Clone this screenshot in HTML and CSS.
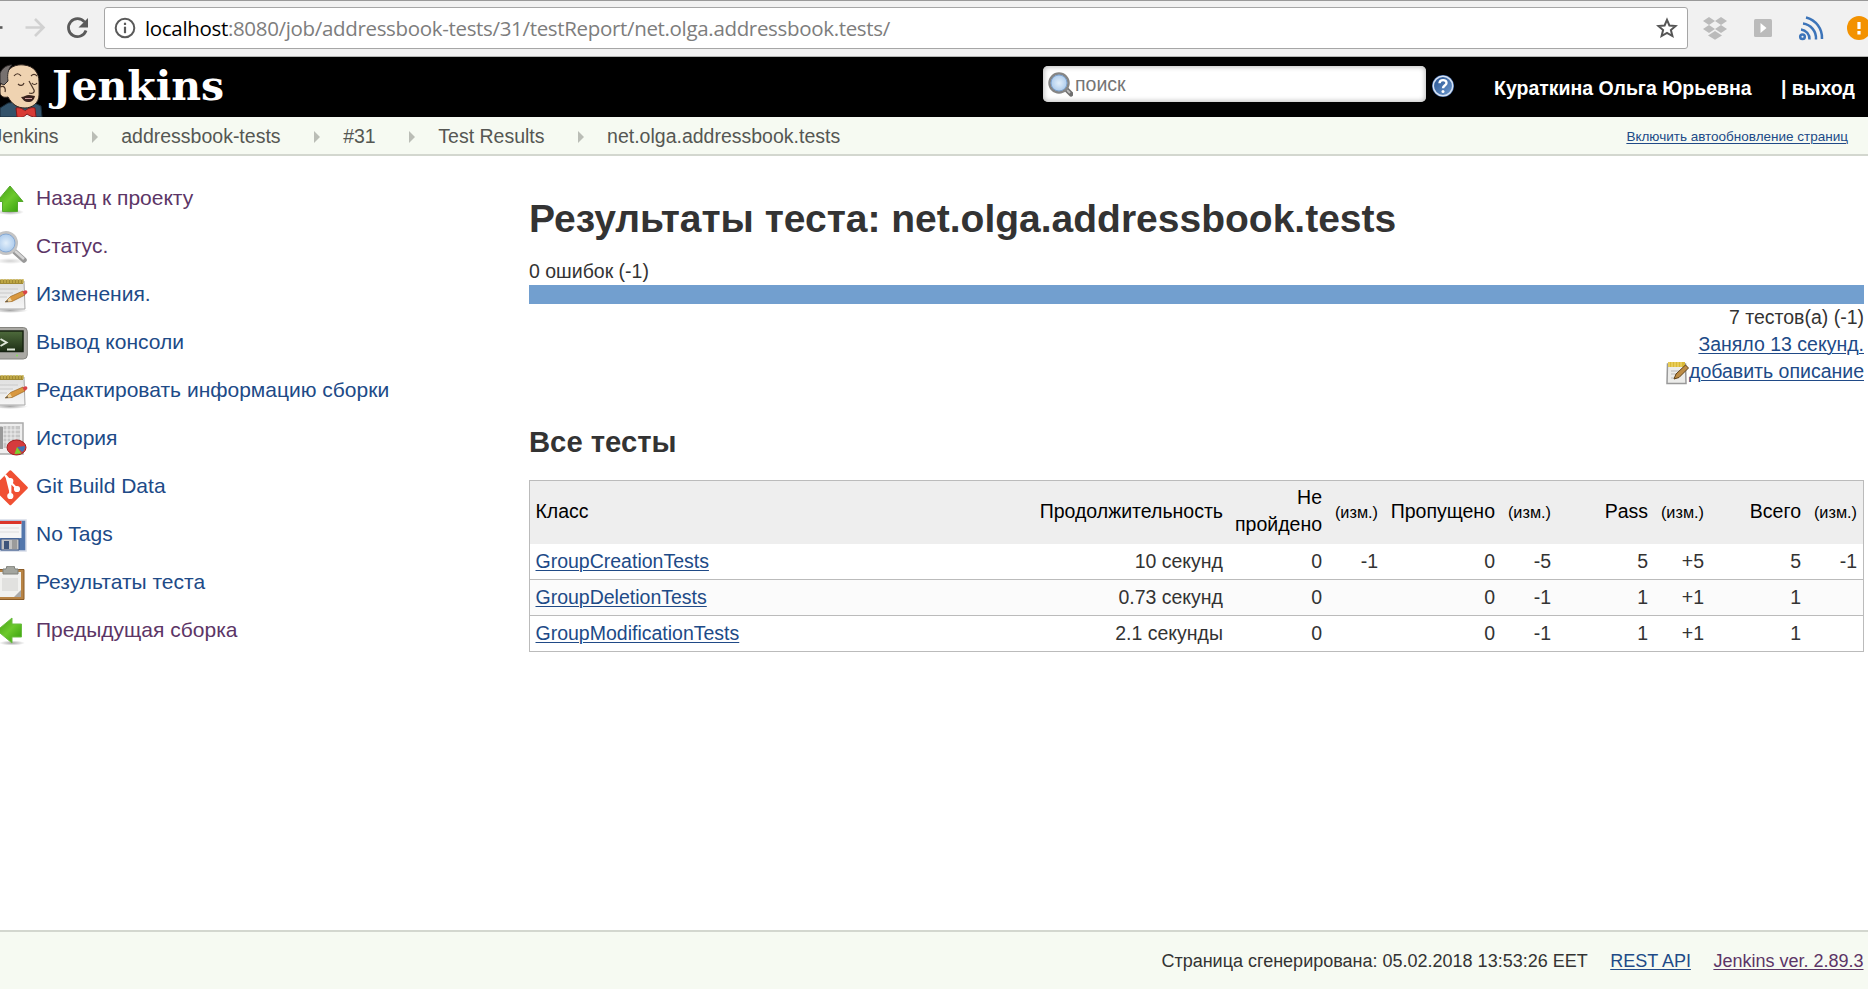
FILE: index.html
```html
<!DOCTYPE html>
<html lang="ru">
<head>
<meta charset="utf-8">
<title>Результаты теста: net.olga.addressbook.tests</title>
<link rel="stylesheet" href="styles.css">
</head>
<body>
<svg class="defs" width="0" height="0" aria-hidden="true">
  <defs>
    <linearGradient id="green" x1="0" y1="0" x2="1" y2="1"><stop offset="0" stop-color="#3f9a12"/><stop offset=".5" stop-color="#6cc92c"/><stop offset="1" stop-color="#2f9a08"/></linearGradient>
    <linearGradient id="paper" x1="0" y1="0" x2="0" y2="1"><stop offset="0" stop-color="#dedede"/><stop offset="1" stop-color="#f6f6f6"/></linearGradient>
    <linearGradient id="screen" x1="0" y1="0" x2="0" y2="1"><stop offset="0" stop-color="#4e6b3c"/><stop offset="1" stop-color="#1e2f16"/></linearGradient>
    <radialGradient id="lens"><stop offset="0" stop-color="#e2effb"/><stop offset="1" stop-color="#a5c6ea"/></radialGradient>
    <radialGradient id="shade"><stop offset="0" stop-color="#000" stop-opacity=".35"/><stop offset="1" stop-color="#000" stop-opacity="0"/></radialGradient>
    <linearGradient id="help" x1="0" y1="0" x2="1" y2="1"><stop offset="0" stop-color="#24508f"/><stop offset="1" stop-color="#6f9bd0"/></linearGradient>
    <symbol id="notepad" viewBox="0 0 36 36">
      <ellipse cx="18" cy="32.500" rx="18" ry="2.500" fill="url(#shade)"/>
      <path d="M3 3h29l1 28H2z" fill="url(#paper)" stroke="#a9a9a9"/>
      <path d="M3 1.500h28V6H3z" fill="#a08a35"/>
      <path d="M4 1v4m3-4v4m3-4v4m3-4v4m3-4v4m3-4v4m3-4v4m3-4v4m3-4v4m3-4v4" stroke="#cdb650" stroke-width="1.300"/>
      <path d="M6 11h20M6 15h15M6 19h9" stroke="#c9c9c9"/>
      <path d="M13 24l5.500-5.500L31 13l2 4-13 6.500z" fill="#d9983f" stroke="#9a6420" stroke-width=".7"/>
      <path d="M13 24l5-4.500 2 3.500z" fill="#ecd3a0"/><path d="M13 24l2.500-1.800.8 1.300z" fill="#333"/>
      <path d="M30.500 13.500l3-1.300c1.800 0 2.300 1.800 1.500 3l-2.500 1.800z" fill="#d8444a"/>
    </symbol>
  </defs>
</svg>

<div class="toolbar">
  <svg class="nav" width="104" height="56" viewBox="0 0 104 56" fill="none">
    <path d="M-8 27.500H2.500" stroke="#5a5a5a" stroke-width="2.600"/>
    <path d="M25.500 27.500H43M35 19l8.500 8.500L35 36" stroke="#d1d1d1" stroke-width="2.600"/>
    <path d="M84.500 22A9 9 0 1 0 86 30.500" stroke="#5a5a5a" stroke-width="2.800"/>
    <path d="M88 18v9.500h-9.500z" fill="#5a5a5a"/>
  </svg>
  <div class="address">
    <svg class="info" width="22" height="22" viewBox="0 0 22 22" fill="none"><circle cx="11" cy="11" r="9.300" stroke="#5a5a5a" stroke-width="2"/><path d="M11 9.700v6.500" stroke="#5a5a5a" stroke-width="2.200"/><path d="M11 5.700v2.300" stroke="#5a5a5a" stroke-width="2.200"/></svg>
    <div class="url"><span>localhost</span>:8080/job/addressbook-tests/31/testReport/net.olga.addressbook.tests/</div>
    <svg class="star" width="22" height="22" viewBox="0 0 22 22"><path d="M11 2.800l2.400 5.700 6.200.5-4.700 4 1.500 6L11 15.800 5.600 19l1.500-6-4.700-4 6.200-.5z" fill="none" stroke="#555" stroke-width="2"/></svg>
  </div>
  <svg class="extensions" width="180" height="56" viewBox="1688 0 180 56">
    <g fill="#bbb"><path d="M1709 17l6 4-6 4-6-4zM1721 17l6 4-6 4-6-4zM1709 25l6 4-6 4-6-4zM1721 25l6 4-6 4-6-4zM1715 31l7 4.500-7 4.300-7-4.300z"/><rect x="1754" y="19" width="18" height="18" rx="1.500"/></g>
    <path d="M1760.500 23l6 5-6 5z" fill="#fff"/>
    <g fill="none" stroke="#3c74b9" stroke-width="2.500"><circle cx="1802.500" cy="36.800" r="2.300"/><path d="M1801 29.500a9.500 9.500 0 0 1 8.500 10M1803 23.500a15 15 0 0 1 13 16M1806 17.500a21 21 0 0 1 16 21.500"/></g>
    <circle cx="1859" cy="28" r="12" fill="#f39200"/><path d="M1859 22v7m0 2v3.500" stroke="#fff" stroke-width="3.200"/>
  </svg>
</div>

<header class="header">
  <svg class="butler" width="44" height="60" viewBox="0 57 44 60">
    <path d="M0 108l8-5 22-2 11 5 1 11H0z" fill="#33536a" stroke="#182b38"/>
    <path d="M5 77C8 67 16 64 24 65c10 1 15 8 15 17v13c0 8-7 13-14 13-8 0-13-4-17-11-5 1-8-1-8-5v-6z" fill="#efd3b1" stroke="#30251f"/>
    <path d="M0 73c3-6 7-8 12-8-4 4-5 10-4 16l-4 4-4-2z" fill="#77716f" stroke="#2d2929"/>
    <path d="M0 87c4-2 6 1 5 5M14 76c2-3 5-3 7 0M31 76c2-2 4-2 6 0M18 84c2 2 5 2 6-1M32 83c1 2 4 2 5 0M29 81l5 9c1 3-2 4-5 3" fill="none" stroke="#4a3528" stroke-width="1.200"/>
    <path d="M21 97c3 0 5-2 8-2 3 0 4 1 6 1-1 4-3 6-7 6-3 0-5-2-7-5z" fill="#39221e"/><path d="M25 98.500h7" stroke="#c99" />
    <path d="M23 110h11l2 7H22z" fill="#eee"/>
    <path d="M16 108c4-1 7 1 9 3 3-3 7-4 10-3l1 9c-4 0-6-1-9-3-3 3-6 4-10 3z" fill="#d83a35" stroke="#801a1a"/>
  </svg>
  <div class="logo">Jenkins</div>
  <div class="search">
    <svg width="25" height="25" viewBox="0 0 25 25"><path d="M17 16l6 6" stroke="#6f6f6f" stroke-width="5" stroke-linecap="round"/><path d="M19 18l3 3" stroke="#bbb" stroke-width="2"/><circle cx="11" cy="11" r="9.500" fill="url(#lens)" stroke="#858585" stroke-width="2.500"/><circle cx="11" cy="11" r="8" fill="none" stroke="#7ca2cf"/></svg>
    <span>поиск</span>
  </div>
  <svg class="help" width="24" height="24" viewBox="0 0 24 24"><circle cx="12" cy="12" r="11" fill="#3d66a5"/><circle cx="12" cy="12" r="9.700" fill="url(#help)" stroke="#d7e2f2" stroke-width="1.500"/><path d="M8.500 9.300c.2-4.300 7-4.100 7-.4 0 2.600-3.500 2.700-3.500 5.300" fill="none" stroke="#fff" stroke-width="2.400"/><circle cx="12" cy="17.500" r="1.500" fill="#fff"/></svg>
  <div class="user">Кураткина Ольга Юрьевна</div>
  <div class="logout">| выход</div>
</header>

<nav class="breadcrumbs">
  <span>Jenkins</span><i></i><span>addressbook-tests</span><i></i><span>#31</span><i></i><span>Test Results</span><i></i><span>net.olga.addressbook.tests</span>
  <a class="refresh">Включить автообновление страниц</a>
</nav>

<div class="page">
  <aside class="side">
    <div class="task visited"><svg viewBox="0 0 36 36"><ellipse cx="18" cy="30" rx="14" ry="3" fill="url(#shade)"/><path d="M18 4l13 15.500h-5.500V29.500h-15V19.500H5z" fill="url(#green)" stroke="#55a82c"/></svg>Назад к проекту</div>
    <div class="task visited"><svg viewBox="0 0 36 36"><ellipse cx="18" cy="31" rx="15" ry="3" fill="url(#shade)" opacity=".5"/><path d="M22 21l10 9" stroke="#999" stroke-width="5.500" stroke-linecap="round"/><path d="M23 21l9 8" stroke="#d5d5d5" stroke-width="2.500"/><circle cx="14" cy="13" r="10.500" fill="url(#lens)" stroke="#c4c4c4" stroke-width="3"/><circle cx="14" cy="13" r="9" fill="none" stroke="#86a9d4"/></svg>Статус.</div>
    <div class="task"><svg><use href="#notepad"/></svg>Изменения.</div>
    <div class="task"><svg viewBox="0 0 36 36"><rect x=".8" y="1.500" width="34.500" height="31.500" rx="4" fill="#aaa9a4" stroke="#858580"/><rect x="2.500" y="5" width="28.500" height="20.500" fill="url(#screen)" stroke="#172312" stroke-width="1.500"/><path d="M8.500 13l6 3.500-6 3.500M15 23.500h8" fill="none" stroke="#dfe7d9" stroke-width="2"/><circle cx="25" cy="29.500" r="1" fill="#86e052"/></svg>Вывод консоли</div>
    <div class="task"><svg><use href="#notepad"/></svg>Редактировать информацию сборки</div>
    <div class="task"><svg viewBox="0 0 36 36"><path d="M2 1h29v31H2z" fill="#eee" stroke="#aaa" stroke-width="1.500"/><path d="M4 4h24v22H4z" fill="#c6c6c6"/><path d="M7 4v22m4-22v22m4-22v22m4-22v22m4-22v22M4 8h24M4 12h24M4 16h24M4 20h24" stroke="#eee"/><path d="M9 5v22" stroke="#999" stroke-width="4"/><ellipse cx="24.500" cy="25.500" rx="9.500" ry="7.500" fill="#d53b3d" stroke="#a32020"/><path d="M25 25l8-1c0 3-1 5-3 6z" fill="#3f73b5"/><path d="M25 25l4.500 6.500-7 .5z" fill="#7bd02e"/></svg>История</div>
    <div class="task"><svg viewBox="0 0 36 36"><rect x="5.600" y="5" width="25.500" height="25.500" rx="1.500" transform="rotate(45 18.300 17.800)" fill="#f05033"/><g stroke="#fff" stroke-width="2.200" fill="#fff"><path d="M13 5l5.300 6v15M18.300 12l7 7"/><circle cx="18.300" cy="11" r="2"/><circle cx="18.300" cy="26" r="2"/><circle cx="25" cy="19" r="2"/></g></svg>Git Build Data</div>
    <div class="task"><svg viewBox="0 0 36 36"><path d="M1 2h33v31H4l-3-3z" fill="#5377ac" stroke="#d6dce8" stroke-width="1.500"/><path d="M5 3h24.500v17H5z" fill="#f5f5f5"/><path d="M5 3h24.500v3H5z" fill="#db3529"/><path d="M7 10h20M7 14h20" stroke="#ddd"/><path d="M9 21h18v11H9z" fill="#c2c2c2" stroke="#3d5785"/><path d="M12 23h5v8h-5z" fill="#3e557a"/><path d="M20 22h5v9h-5z" fill="#9b9b9b"/></svg>No Tags</div>
    <div class="task"><svg viewBox="0 0 36 36"><path d="M3 3.500h29v30H3z" fill="#b88445" stroke="#8a5b27"/><path d="M6 6h23v25H6z" fill="#f1f1ef"/><path d="M10 12h16v13H10z" fill="#e1e1df"/><path d="M29 24l-7 7h7z" fill="#aaa"/><path d="M11 3h3l1-3h7l1 3h3v5H11z" fill="#a4a69f" stroke="#7e807a"/></svg>Результаты теста</div>
    <div class="task visited"><svg viewBox="0 0 36 36"><ellipse cx="20" cy="29" rx="13" ry="2.500" fill="url(#shade)"/><path d="M5 16.500L20 4v6h9.500v13H20v6z" fill="url(#green)" stroke="#6bbd43"/></svg>Предыдущая сборка</div>
  </aside>

  <main class="main">
    <h1>Результаты теста: net.olga.addressbook.tests</h1>
    <div class="line">0 ошибок (-1)</div>
    <div class="bar"></div>
    <div class="line right">7 тестов(а) (-1)</div>
    <div class="line right"><a>Заняло 13 секунд.</a></div>
    <div class="line right describe"><svg width="23" height="24" viewBox="0 0 23 24"><path d="M1.500 3h18l.5 19.500H1z" fill="#ececea" stroke="#999" stroke-width="1.500"/><path d="M2 1h17v5H2z" fill="#dab936"/><path d="M3 1v5m3-5v5m3-5v5m3-5v5m3-5v5" stroke="#f3dd7a"/><path d="M5 10h9M5 13h6M5 17h4" stroke="#bbb"/><path d="M8 18l2-5 9.500-9 3 3-9.500 9.500z" fill="#bd8c45" stroke="#5f4118"/></svg><a>добавить описание</a></div>
    <h2>Все тесты</h2>
    <table>
      <colgroup><col class="c-name"><col class="c-time"><col class="c-fail"><col class="c-diff"><col class="c-skip"><col class="c-diff"><col class="c-count"><col class="c-diff"><col class="c-count"><col class="c-diff"></colgroup>
      <thead><tr><th>Класс</th><th>Продолжительность</th><th>Не пройдено</th><th class="diff">(изм.)</th><th>Пропущено</th><th class="diff">(изм.)</th><th>Pass</th><th class="diff">(изм.)</th><th>Всего</th><th class="diff">(изм.)</th></tr></thead>
      <tbody>
        <tr><td><a>GroupCreationTests</a></td><td>10 секунд</td><td>0</td><td>-1</td><td>0</td><td>-5</td><td>5</td><td>+5</td><td>5</td><td>-1</td></tr>
        <tr><td><a>GroupDeletionTests</a></td><td>0.73 секунд</td><td>0</td><td></td><td>0</td><td>-1</td><td>1</td><td>+1</td><td>1</td><td></td></tr>
        <tr><td><a>GroupModificationTests</a></td><td>2.1 секунды</td><td>0</td><td></td><td>0</td><td>-1</td><td>1</td><td>+1</td><td>1</td><td></td></tr>
      </tbody>
    </table>
  </main>
</div>

<footer class="footer"><span>Страница сгенерирована: 05.02.2018 13:53:26 EET</span><a>REST API</a><a class="visited">Jenkins ver. 2.89.3</a></footer>
</body>
</html>
```

FILE: styles.css
```css
* { box-sizing: border-box; }

body {
  margin: 0;
  height: 989px;
  display: flex;
  flex-direction: column;
  overflow: hidden;
  background: #fff;
  color: #333;
  font: 19.5px/27px "Liberation Sans", Arial, sans-serif;
}

svg { display: block; flex: none; }
.defs { position: absolute; }
a { color: #204a87; text-decoration: underline; text-decoration-thickness: 1px; text-underline-offset: 2px; }
.visited { color: #5c3566; }

/* Browser toolbar */
.toolbar {
  height: 57px;
  flex: none;
  display: flex;
  align-items: flex-start;
  background: #f1f1f1;
  border-top: 1px solid #999;
  border-bottom: 1px solid #b3b5b3;
}
.nav, .extensions { margin-top: -1px; }
.address {
  width: 1584px;
  height: 42px;
  margin-top: 6px;
  padding: 0 9px 0 9px;
  display: flex;
  align-items: center;
  background: #fff;
  border: 1px solid #a6a6a6;
  border-radius: 3px;
}
.url {
  margin-left: 9px;
  color: #7d7d7d;
  font-family: "Open Sans", "Noto Sans", sans-serif;
  font-size: 20.5px;
  letter-spacing: -0.33px;
  white-space: nowrap;
}
.url span { color: #000; }
.star { margin-left: auto; }

/* Jenkins header */
.header {
  height: 60px;
  flex: none;
  display: flex;
  background: #000;
  color: #fff;
  font-weight: bold;
  white-space: nowrap;
}
.logo {
  width: 994px;
  padding-left: 8px;
  font: bold 41px/58px "DejaVu Serif", serif;
}
.search {
  width: 383px;
  height: 36px;
  margin: 9px 0 0 5px;
  padding: 0 5px;
  display: flex;
  align-items: center;
  gap: 2px;
  background: #fff;
  border-radius: 5px;
  box-shadow: inset 0 0 5px 1px #bbb;
  color: #757575;
  font-weight: normal;
}
.help { margin: 17px 0 0 5px; }
.user { width: 326px; padding: 18px 0 0 39px; }
.logout { padding-top: 18px; }

.breadcrumbs {
  height: 39px;
  flex: none;
  padding: 6px 20px 0 0;
  display: flex;
  background: #f6faf2;
  border-bottom: 2px solid #d3d7cf;
  color: #555753;
}
.breadcrumbs span:first-child { margin-left: -7.5px; }
.breadcrumbs i {
  margin: 8px 23px 0 33.6px;
  border: solid transparent;
  border-width: 6px 0 6px 6px;
  border-left-color: #babdb6;
  height: 12px;
}
.refresh { margin-left: auto; font-size: 13.5px; }

/* Content */
.page { flex: 1; display: flex; }
.side { width: 529px; padding-top: 18px; }
.task {
  height: 48px;
  display: flex;
  gap: 8px;
  margin-left: -8px;
  color: #204a87;
  font-size: 21px;
  line-height: 48px;
}
.task.visited { color: #5c3566; }
.task svg { width: 36px; height: 36px; margin-top: 8px; }

.main { width: 1335px; padding-top: 40px; }
h1 { margin: 0 0 16px; font-size: 39px; line-height: 46px; }
h2 { margin: 40px 0 21px; font-size: 29.25px; line-height: 34px; }
.bar { height: 19px; background: #729fcf; }
.right { text-align: right; }
.describe { display: flex; justify-content: flex-end; }
.describe svg { margin-top: 3px; }

table {
  width: 1335px;
  table-layout: fixed;
  border-collapse: separate;
  border-spacing: 0;
  border: 1px solid #bbb;
  border-bottom: 0;
}
.c-name { width: 503px; }
.c-time { width: 196px; }
.c-fail { width: 99px; }
.c-diff { width: 56px; }
.c-skip { width: 117px; }
.c-count { width: 97px; }
th, td { padding: 4px 6px; text-align: right; }
th {
  height: 63px;
  padding: 3px 6px 6px;
  background: #eee;
  color: #000;
  font-weight: normal;
}
th:first-child, td:first-child { padding-left: 5.5px; text-align: left; }
th.diff { padding: 5px 6px 6px 0; font-size: 16.25px; }
td { height: 36px; border-bottom: 1px solid #bbb; }
tbody tr:nth-child(even) { background: #fbfbfb; }

.footer {
  height: 59px;
  flex: none;
  padding: 17px 4.500px 0 0;
  display: flex;
  justify-content: flex-end;
  gap: 22.5px;
  background: #f6faf2;
  border-top: 2px solid #d3d7cf;
  font-size: 18px;
  line-height: 24px;
}
```
